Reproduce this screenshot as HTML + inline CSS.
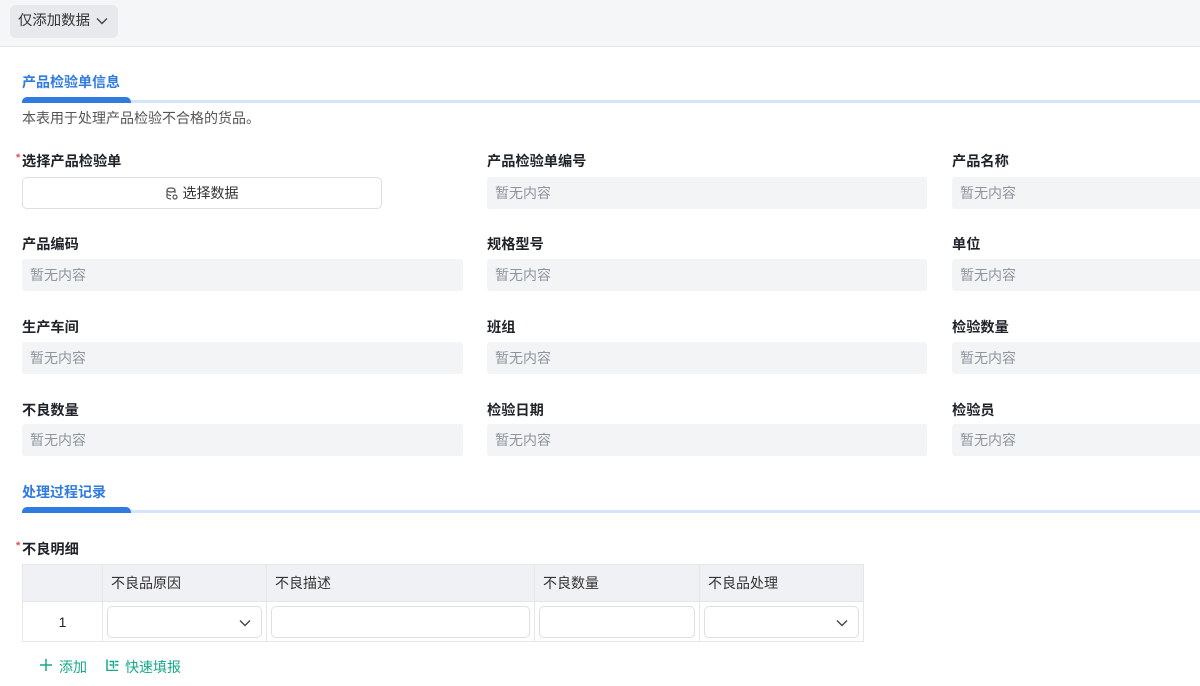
<!DOCTYPE html>
<html><head><meta charset="utf-8"><style>
*{box-sizing:border-box;margin:0;padding:0}
body{width:1200px;height:686px;overflow:hidden;background:#fff;font-family:"Liberation Sans","Noto Sans CJK SC",sans-serif;font-size:14px;color:#1f2329;position:relative}
.top{position:absolute;left:0;top:0;width:1200px;height:47px;background:#f5f6f8;border-bottom:1px solid #e4e6ea}
.btn{position:absolute;left:10px;top:5px;width:108px;height:33px;background:#e8e9ed;border-radius:6px;font-size:14.4px;line-height:33px;padding-left:8px;color:#333}
.a{position:absolute}
.title{color:#2f7be0;font-weight:bold;font-size:14px}
.bar{position:absolute;left:22px;height:6px;width:109px;background:#2f7be0;border-radius:5px 5px 0 0}
.line{position:absolute;left:22px;right:0;height:3px;background:#d5e4f8}
.lbl{position:absolute;font-weight:bold;font-size:14.2px;color:#1f2329}
.fld{position:absolute;height:32px;background:#f3f4f6;border-radius:3px;color:#8f959e;font-size:14px;line-height:32px;padding-left:8px}
.star{color:#e34d59;font-size:11px;position:absolute;left:-6px;top:1px}
table{position:absolute;left:22px;top:564px;border-collapse:collapse;font-size:14px}
td,th{border:1px solid #e4e6ea;font-weight:normal;text-align:left;padding:0 8px}
th{background:#f0f1f4;height:37px;color:#333}
td{height:40px}
.in{border:1px solid #dcdfe5;border-radius:5px;height:32px;position:relative}
</style></head><body>
<div class="top"><div class="btn">仅添加数据 <svg width="12" height="8" viewBox="0 0 12 8" style="margin-left:2px"><path d="M1 1.5l5 5 5-5" fill="none" stroke="#444" stroke-width="1.4"/></svg></div></div>
<div class="a title" style="left:22px;top:72px">产品检验单信息</div>
<div class="line" style="top:100px"></div><div class="bar" style="top:97px"></div>
<div class="a" style="left:22px;top:108px;color:#555;font-size:14px">本表用于处理产品检验不合格的货品。</div>

<div class="lbl" style="left:22px;top:151px"><span class="star">*</span>选择产品检验单</div>
<div class="a" style="left:22px;top:177px;width:360px;height:32px;border:1px solid #dcdfe5;border-radius:5px;text-align:center;line-height:30px;color:#333"><svg width="12" height="13" viewBox="0 0 12 13" style="vertical-align:-2px;margin-right:5px"><ellipse cx="5" cy="3" rx="4" ry="2" fill="none" stroke="#555" stroke-width="1.2"/><path d="M1 3v7c0 1 2 2 4 2M9 3v3M1 6.5c0 1 2 2 4 2" fill="none" stroke="#555" stroke-width="1.2"/><circle cx="9" cy="10" r="2" fill="none" stroke="#555" stroke-width="1.2"/></svg>选择数据</div>
<div class="lbl" style="left:487px;top:151px">产品检验单编号</div><div class="fld" style="left:487px;top:177px;width:440px">暂无内容</div>
<div class="lbl" style="left:952px;top:151px">产品名称</div><div class="fld" style="left:952px;top:177px;width:260px">暂无内容</div>

<div class="lbl" style="left:22px;top:234px">产品编码</div><div class="fld" style="left:22px;top:259px;width:441px">暂无内容</div>
<div class="lbl" style="left:487px;top:234px">规格型号</div><div class="fld" style="left:487px;top:259px;width:440px">暂无内容</div>
<div class="lbl" style="left:952px;top:234px">单位</div><div class="fld" style="left:952px;top:259px;width:260px">暂无内容</div>

<div class="lbl" style="left:22px;top:317px">生产车间</div><div class="fld" style="left:22px;top:342px;width:441px">暂无内容</div>
<div class="lbl" style="left:487px;top:317px">班组</div><div class="fld" style="left:487px;top:342px;width:440px">暂无内容</div>
<div class="lbl" style="left:952px;top:317px">检验数量</div><div class="fld" style="left:952px;top:342px;width:260px">暂无内容</div>

<div class="lbl" style="left:22px;top:400px">不良数量</div><div class="fld" style="left:22px;top:424px;width:441px">暂无内容</div>
<div class="lbl" style="left:487px;top:400px">检验日期</div><div class="fld" style="left:487px;top:424px;width:440px">暂无内容</div>
<div class="lbl" style="left:952px;top:400px">检验员</div><div class="fld" style="left:952px;top:424px;width:260px">暂无内容</div>

<div class="a title" style="left:22px;top:482px">处理过程记录</div>
<div class="line" style="top:510px"></div><div class="bar" style="top:507px"></div>

<div class="lbl" style="left:22px;top:539px"><span class="star">*</span>不良明细</div>
<table>
<tr><th style="width:80px"></th><th style="width:164px">不良品原因</th><th style="width:268px">不良描述</th><th style="width:165px">不良数量</th><th style="width:164px">不良品处理</th></tr>
<tr><td style="text-align:center">1</td>
<td style="padding:0 4px"><div class="in"><svg width="12" height="8" viewBox="0 0 12 8" style="position:absolute;right:10px;top:12px"><path d="M1 1.5l5 5 5-5" fill="none" stroke="#444" stroke-width="1.4"/></svg></div></td>
<td style="padding:0 4px"><div class="in"></div></td>
<td style="padding:0 4px"><div class="in"></div></td>
<td style="padding:0 4px"><div class="in"><svg width="12" height="8" viewBox="0 0 12 8" style="position:absolute;right:10px;top:12px"><path d="M1 1.5l5 5 5-5" fill="none" stroke="#444" stroke-width="1.4"/></svg></div></td></tr>
</table>
<svg class="a" style="left:40px;top:659px" width="12" height="12" viewBox="0 0 12 12"><path d="M6 0v12M0 6h12" stroke="#14a98a" stroke-width="1.5"/></svg>
<div class="a" style="left:59px;top:657px;color:#14a98a;font-size:14px">添加</div>
<svg class="a" style="left:106px;top:659px" width="13" height="12" viewBox="0 0 13 12"><path d="M1 0.5v11h11M3.5 2.5h4v7M3.5 6h3M9 2.5h3.5M9 6h3.5" fill="none" stroke="#14a98a" stroke-width="1.5"/></svg>
<div class="a" style="left:125px;top:657px;color:#14a98a;font-size:14px">快速填报</div>
</body></html>
